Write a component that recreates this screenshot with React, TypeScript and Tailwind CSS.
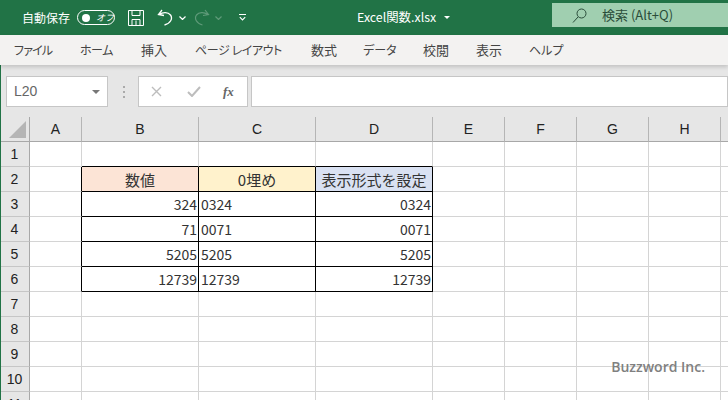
const jp = 'font-["Noto_Sans_CJK_JP",sans-serif]';

const tabs = [
  { label: 'ファイル', cls: 'w-[66px] text-[12px] tracking-[-0.8px]' },
  { label: 'ホーム', cls: 'w-[61px] text-[12px] tracking-[-0.5px]' },
  { label: '挿入', cls: 'w-[54px] text-[13px]' },
  { label: 'ページ レイアウト', cls: 'w-[116px] text-[12px] tracking-[-0.4px]' },
  { label: '数式', cls: 'w-[52px] text-[13px]' },
  { label: 'データ', cls: 'w-[60px] text-[12px]' },
  { label: '校閲', cls: 'w-[53px] text-[13px]' },
  { label: '表示', cls: 'w-[53px] text-[13px]' },
  { label: 'ヘルプ', cls: 'w-[60px] text-[12px]' },
];

const columns = ['A', 'B', 'C', 'D', 'E', 'F', 'G', 'H'];

const tableRows: Record<number, { text: string; cls: string }[]> = {
  2: [
    { text: '数値', cls: 'justify-center bg-[#fce4d6] text-[15px]' },
    { text: '0埋め', cls: 'justify-center bg-[#fff2cc] text-[15px]' },
    { text: '表示形式を設定', cls: 'justify-center bg-[#d9e1f2] text-[15px]' },
  ],
  3: [
    { text: '324', cls: 'justify-end pr-[1px]' },
    { text: '0324', cls: 'justify-start pl-[2px]' },
    { text: '0324', cls: 'justify-end pr-[1px]' },
  ],
  4: [
    { text: '71', cls: 'justify-end pr-[1px]' },
    { text: '0071', cls: 'justify-start pl-[2px]' },
    { text: '0071', cls: 'justify-end pr-[1px]' },
  ],
  5: [
    { text: '5205', cls: 'justify-end pr-[1px]' },
    { text: '5205', cls: 'justify-start pl-[2px]' },
    { text: '5205', cls: 'justify-end pr-[1px]' },
  ],
  6: [
    { text: '12739', cls: 'justify-end pr-[1px]' },
    { text: '12739', cls: 'justify-start pl-[2px]' },
    { text: '12739', cls: 'justify-end pr-[1px]' },
  ],
};

function TitleBar() {
  return (
    <div className="relative flex h-[35px] items-center bg-[#217346] text-white">
      <span className={`ml-[22px] text-[12px] ${jp}`}>自動保存</span>
      <div className="ml-[7px] flex h-[15px] w-[38px] items-center rounded-full border border-white pl-[4px]">
        <div className="h-[8px] w-[8px] rounded-full bg-white" />
        <span className={`ml-[6px] text-[9px] italic ${jp}`}>オフ</span>
      </div>
      <svg className="ml-[13px]" width="16" height="16" viewBox="0 0 16 16" fill="none" stroke="#fff" strokeWidth="1">
        <path d="M0.500 0.500h15v15H0.500zM4 0.500v5h8v-5M4 15.500v-6h8v6M8 10.500v5" />
      </svg>
      <svg className="ml-[13px]" width="16" height="17" viewBox="0 0 16 17" fill="none" stroke="#fff" strokeWidth="1.3">
        <path d="M5 1L1.500 5.500 7 6.500M2 5.500C6 3 11 3 13.500 6c2.500 3.500 0 8.500-6 10" />
      </svg>
      <svg className="ml-[6px]" width="7" height="4" viewBox="0 0 7 4" fill="none" stroke="#fff" strokeWidth="1.2">
        <path d="M0.500 0.500L3.500 3.500 6.500 0.500" />
      </svg>
      <svg className="ml-[8px]" width="16" height="17" viewBox="0 0 16 17" fill="none" stroke="#5f9a79" strokeWidth="1.2">
        <path d="M11 1l3.500 4.500-5.500 1M14 5.500C10 3 5 3 2.500 6c-2.500 3.500 0 8.500 6 10" />
      </svg>
      <svg className="ml-[5px]" width="7" height="4" viewBox="0 0 7 4" fill="none" stroke="#5f9a79" strokeWidth="1.2">
        <path d="M0.500 0.500L3.500 3.500 6.500 0.500" />
      </svg>
      <svg className="ml-[17px]" width="7" height="7" viewBox="0 0 7 7" fill="none" stroke="#fff" strokeWidth="1.1">
        <path d="M0 0.500h7M0.800 3.200L3.500 6 6.200 3.200" />
      </svg>
      <span className={`ml-[111px] text-[12.400px] ${jp}`}>Excel関数.xlsx</span>
      <div className="ml-[8px] h-0 w-0 border-x-[3px] border-t-[3px] border-x-transparent border-t-white" />
      <div className="ml-auto mb-[5px] flex h-[24px] w-[176px] items-center bg-[#a0cfb0] pl-[20px] text-[#2a4d3a]">
        <svg width="15" height="15" viewBox="0 0 15 15" fill="none" stroke="#2a4d3a" strokeWidth="1">
          <circle cx="9.500" cy="5.500" r="4.500" />
          <path d="M6 9l-5 5.500" />
        </svg>
        <span className={`ml-[15px] text-[13px] ${jp}`}>検索 (Alt+Q)</span>
      </div>
    </div>
  );
}

function RibbonTabs() {
  return (
    <div className="relative z-10 flex h-[30px] items-center bg-[#f3f2f1] pl-[14px] shadow-[0_2px_4px_rgba(0,0,0,0.16)]">
      {tabs.map((tab) => (
        <span key={tab.label} className={`${tab.cls} shrink-0 text-[#444] [font-feature-settings:"palt"] ${jp}`}>
          {tab.label}
        </span>
      ))}
    </div>
  );
}

function FormulaBar() {
  return (
    <div className="flex h-[52px] bg-[#e6e6e6] pl-[6px] pt-[11px]">
      <div className="flex h-[31px] w-[102px] items-center justify-between border border-[#c6c6c6] bg-white pl-[7px] pr-[7px]">
        <span className="font-['Liberation_Sans',sans-serif] text-[14px] text-[#666]">L20</span>
        <div className="h-0 w-0 border-x-[4px] border-t-[4px] border-x-transparent border-t-[#777]" />
      </div>
      <div className="ml-[14px] flex h-[31px] w-[3px] flex-col items-center justify-center gap-[3px]">
        <div className="h-[2px] w-[2px] bg-[#aaa]" />
        <div className="h-[2px] w-[2px] bg-[#aaa]" />
        <div className="h-[2px] w-[2px] bg-[#aaa]" />
      </div>
      <div className="ml-[13px] flex h-[31px] w-[110px] items-center border border-[#c6c6c6] bg-white">
        <svg className="ml-[12px]" width="11" height="11" viewBox="0 0 11 11" fill="none" stroke="#bdbdbd" strokeWidth="1.4">
          <path d="M1 1l9 9M10 1l-9 9" />
        </svg>
        <svg className="ml-[25px]" width="14" height="11" viewBox="0 0 14 11" fill="none" stroke="#bdbdbd" strokeWidth="2">
          <path d="M1 6l4 4 8-9" />
        </svg>
        <span className="ml-[22px] font-['Liberation_Serif',serif] text-[13px] font-bold italic text-[#666]">
          fx
        </span>
      </div>
      <div className="ml-[3px] h-[31px] flex-1 border border-[#c6c6c6] bg-white" />
    </div>
  );
}

function Sheet() {
  const rows = [1, 2, 3, 4, 5, 6, 7, 8, 9, 10, 11];
  return (
    <div className={`grid grid-cols-[30px_52px_117px_117px_117px_72px_72px_72px_72px_7px] grid-rows-[25px_repeat(11,25px)] text-[14px] leading-none text-[#333] ${jp}`}>
      <div className="flex items-end justify-end border-r border-b border-[#a8a8a8] bg-[#e6e6e6] p-[3px]">
        <div className="h-0 w-0 border-b-[17px] border-l-[17px] border-b-[#b5b5b5] border-l-transparent" />
      </div>
      {columns.map((c) => (
        <div key={c} className="flex items-center justify-center border-r border-b border-r-[#b5b5b5] border-b-[#a8a8a8] bg-[#e6e6e6] font-['Liberation_Sans',sans-serif] text-[#222]">
          {c}
        </div>
      ))}
      <div className="border-b border-b-[#a8a8a8] bg-[#e6e6e6]" />
      {rows.map((r) => {
        const cells = tableRows[r];
        const belowTop = r === 1;
        return [
          <div key={`h${r}`} className="flex items-center justify-center border-r border-b border-r-[#a8a8a8] border-b-[#c6c6c6] bg-[#e6e6e6] font-['Liberation_Sans',sans-serif] text-[#222]">
            {r}
          </div>,
          <div key={`a${r}`} className={`border-b border-b-[#d4d4d4] border-r ${cells ? 'border-r-black' : 'border-r-[#d4d4d4]'}`} />,
          ...[0, 1, 2].map((i) =>
            cells ? (
              <div key={`c${r}-${i}`} className={`flex items-center border-r border-b border-black ${cells[i].cls}`}>
                {cells[i].text}
              </div>
            ) : (
              <div key={`c${r}-${i}`} className={`border-r border-b border-r-[#d4d4d4] ${belowTop ? 'border-b-black' : 'border-b-[#d4d4d4]'}`} />
            ),
          ),
          ...[0, 1, 2, 3].map((i) => (
            <div key={`e${r}-${i}`} className="border-r border-b border-[#d4d4d4]" />
          )),
          <div key={`z${r}`} className="border-b border-[#d4d4d4]" />,
        ];
      })}
    </div>
  );
}

export default function App() {
  return (
    <div className="relative h-[400px] w-[728px] overflow-hidden bg-white">
      <TitleBar />
      <RibbonTabs />
      <FormulaBar />
      <Sheet />
      <div className="absolute left-0 top-[35px] bottom-0 w-px bg-[#217346]" />
      <span className="absolute right-[23px] top-[360px] font-['Open_Sans',sans-serif] text-[14px] font-semibold leading-none text-[#808080]">
        Buzzword Inc.
      </span>
    </div>
  );
}
